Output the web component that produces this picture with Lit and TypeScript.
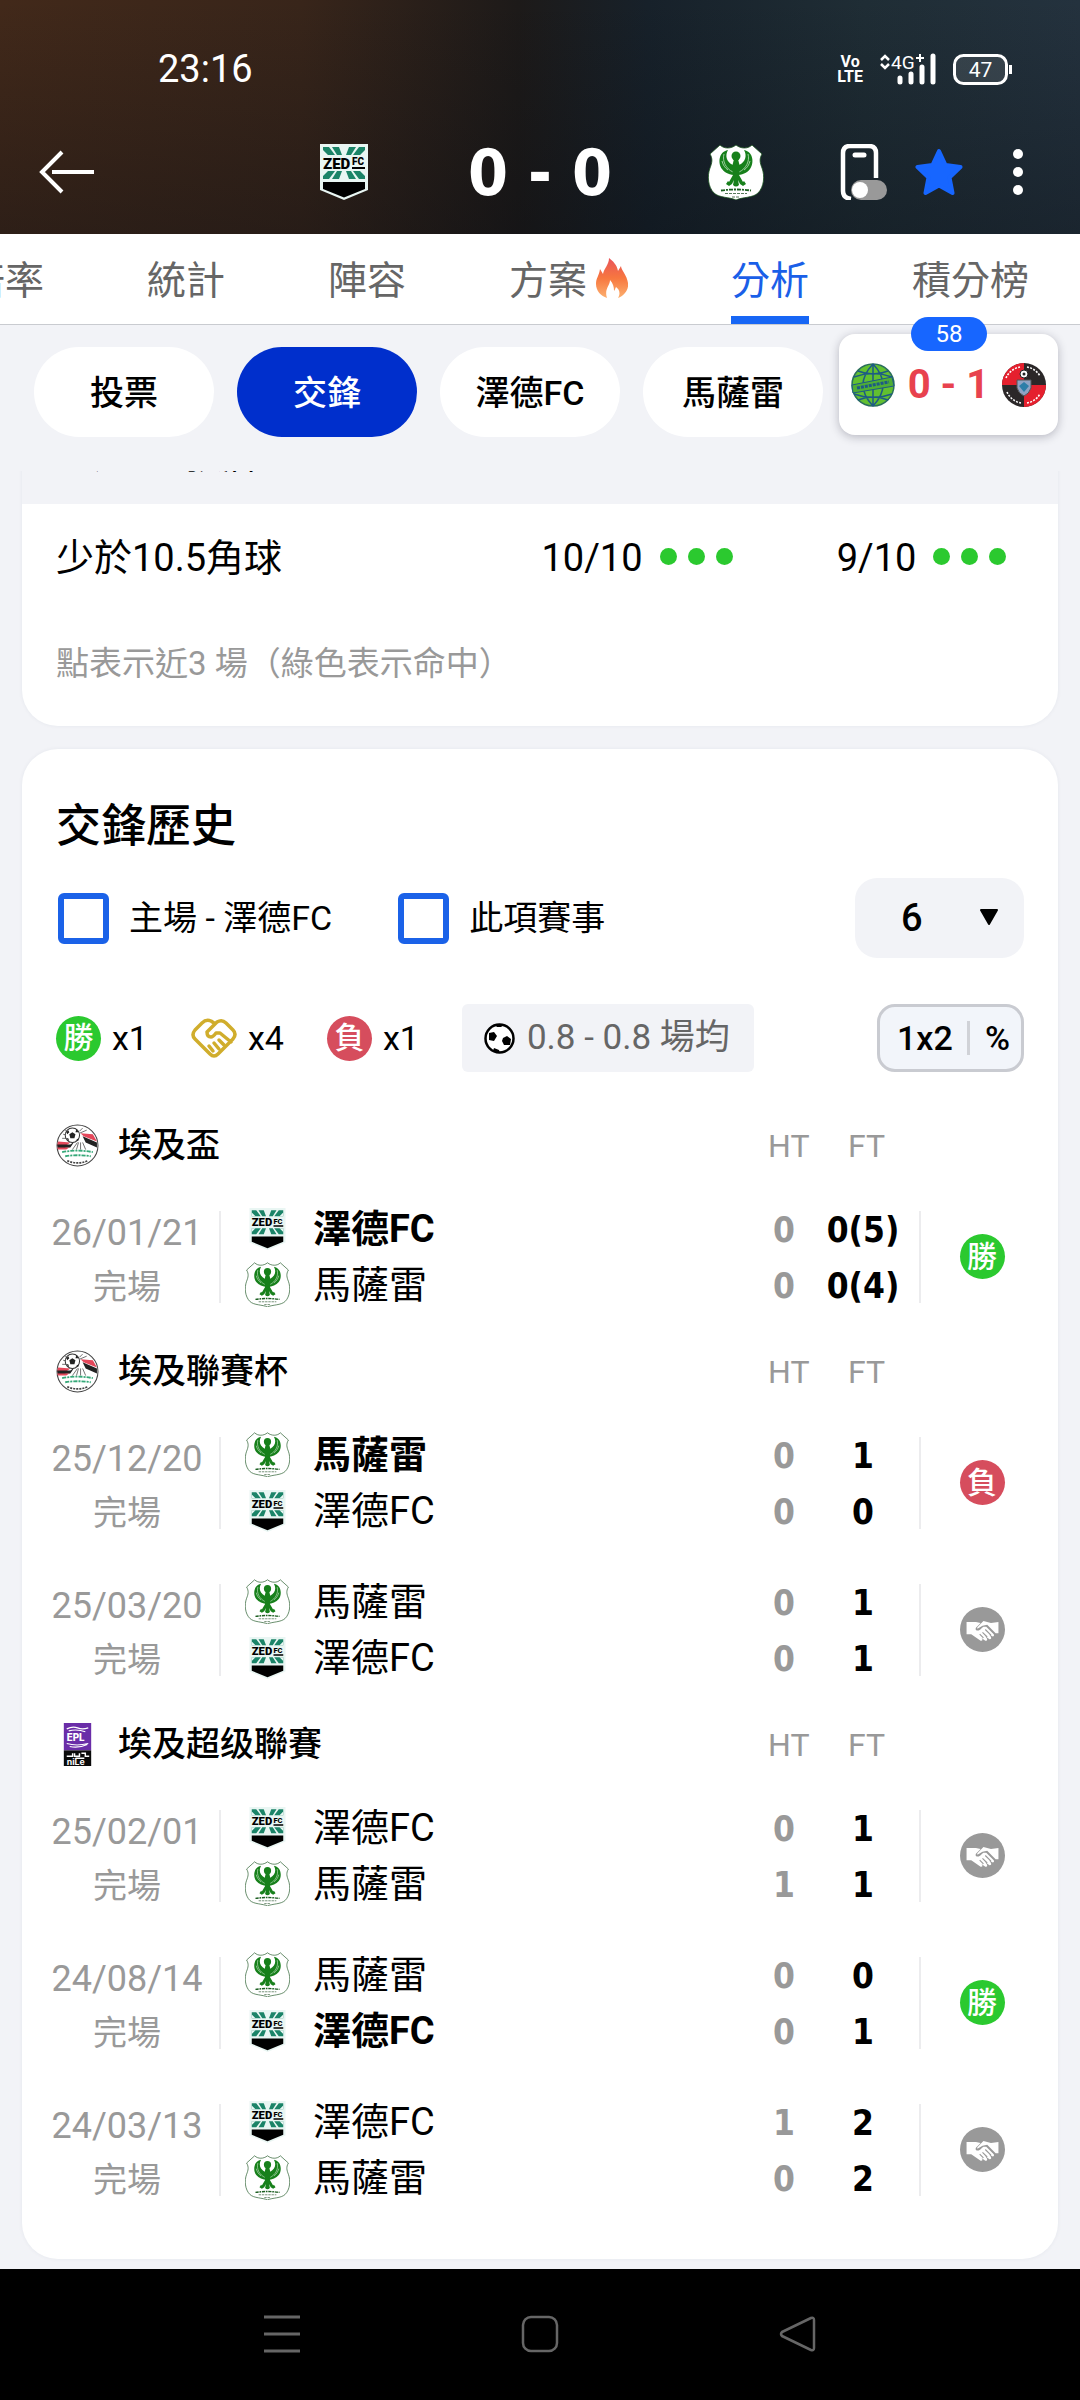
import { LitElement, html, css, svg } from "lit";
import { customElement, property, state } from "lit/decorators.js";
import { classMap } from "lit/directives/class-map.js";

type Team = "zed" | "masry";
type Result = "win" | "draw" | "loss";

interface Match {
  date: string;
  teams: [Team, Team];
  bold?: Team;
  ht: [string, string];
  ft: [string, string];
  result: Result;
}

interface League {
  icon: "efa" | "epl";
  name: string;
  matches: Match[];
}

const TEAM_NAMES: Record<Team, string> = { zed: "澤德FC", masry: "馬薩雷" };

const LEAGUES: League[] = [
  {
    icon: "efa",
    name: "埃及盃",
    matches: [
      { date: "26/01/21", teams: ["zed", "masry"], bold: "zed", ht: ["0", "0"], ft: ["0(5)", "0(4)"], result: "win" },
    ],
  },
  {
    icon: "efa",
    name: "埃及聯賽杯",
    matches: [
      { date: "25/12/20", teams: ["masry", "zed"], bold: "masry", ht: ["0", "0"], ft: ["1", "0"], result: "loss" },
      { date: "25/03/20", teams: ["masry", "zed"], ht: ["0", "0"], ft: ["1", "1"], result: "draw" },
    ],
  },
  {
    icon: "epl",
    name: "埃及超级聯賽",
    matches: [
      { date: "25/02/01", teams: ["zed", "masry"], ht: ["0", "1"], ft: ["1", "1"], result: "draw" },
      { date: "24/08/14", teams: ["masry", "zed"], bold: "zed", ht: ["0", "0"], ft: ["0", "1"], result: "win" },
      { date: "24/03/13", teams: ["zed", "masry"], ht: ["1", "0"], ft: ["2", "2"], result: "draw" },
    ],
  },
];

const TRENDS = [
  { label: "少於4.5張牌", home: "9/10", away: "10/10" },
  { label: "少於10.5角球", home: "10/10", away: "9/10" },
];

const handshake = svg`
  <circle cx="24" cy="24" r="24" fill="#999"/>
  <path fill="#fff" d="M7 16h10l5 1-5 5c-1 2 0 3 2 3 3 0 4-3 6-4l3 0 8 8c1 2-1 3-2 2l-3-2 2 3c1 2-1 3-2 2l-4-3 2 3c0 2-1 2-2 2l-4-3 1 2c0 1-1 1-2 1l-10-7H7z"/>
  <path fill="#fff" d="M41 16v12h-3l-9-9-5 1-5 3c-1 0-1-1 0-2l6-6 8 2z"/>
  <path fill="none" stroke="#999" stroke-width="1.2" d="M27 24l6 6M24 27l5 5M21 29l4 4"/>`;

const ART = {
  zed: {
    box: "0 0 48 56",
    body: svg`
      <path fill="#e9f6f3" d="M0 0h48v46L24 56 0 46z"/>
      <path fill="#1b8468" d="M3 3h6l6 8H3zM12 3h7l3 8h-5zM29 3h7l-5 8h-5zM39 3h6v8H33zM3 27h12l-6 8H3zM17 27h5l-3 8h-7zM26 27h5l5 8h-7zM33 27h12v8h-6z"/>
      <path fill="#e9f6f3" d="M3 6l5 5H3zM45 6v5h-5zM3 32l5-5H3zM45 32v-5h-5z"/>
      <text x="3" y="24.500" font-family="Roboto, sans-serif" font-weight="900" font-size="15" fill="#000">ZED</text>
      <text x="32" y="21" font-family="Roboto, sans-serif" font-weight="900" font-size="10" fill="#000">FC</text>
      <path fill="#000" d="M32 23h13v2H32zM3 38h42v7l-21 8.500L3 45z"/>`,
  },
  masry: {
    box: "0 0 56 56",
    body: svg`
      <path fill="#fff" stroke="#16501c" stroke-width="0.8" d="M12 1c4 4 11 4 16 0 5 4 12 4 16 0l10 9c-3 5-2 9 0 14 3 8 2 19-4 25-5 5-16 4-22 7-6-3-17-2-22-7-6-6-7-17-4-25 2-5 3-9 0-14z"/>
      <path fill="#17801b" d="M20 6C10 8 10 20 14 25c3 4 8 6 14 6s11-2 14-6c4-5 4-17-6-19 3 5 2 12-5 15q-3 1-6 0C18 18 17 11 20 6z"/>
      <path fill="none" stroke="#d4efd4" stroke-width="0.700" d="M16 10c-2 7 2 15 9 18M40 10c2 7-2 15-9 18M14 17c1 4 3 7 6 9M42 17c-1 4-3 7-6 9"/>
      <circle cx="28" cy="12" r="4.500" fill="#17801b"/>
      <path fill="#17801b" d="M26 15h4l2 8-1 8 4 7 1-1 2 3-3 2-3-2-2-4 1 5q-3 3-6 0l1-5-2 4-3 2-3-2 2-3 1 1 4-7-1-8z"/>
      <path fill="none" stroke="#1b5e20" stroke-width="1.800" stroke-dasharray="4 1 2 1" d="M13 46.500q15-2 30 0"/>
      <path fill="none" stroke="#456b48" stroke-width="0.900" stroke-dasharray="3 1" d="M17 49.500h22M24 53h8"/>`,
  },
  efa: {
    box: "0 0 42 42",
    body: svg`
      <circle cx="21" cy="21" r="20" fill="#fff" stroke="#444" stroke-width="1"/>
      <path fill="#e4475a" d="M24 9l12 1 4 7-13-5zM2 17l12 1-4 3H1z"/>
      <path fill="#222" d="M26 12l14 6v5l-11-5zM1 20l13 0 4-3-4 6-12 1z"/>
      <path fill="#e4475a" d="M1 23h12l-3 2H2z"/>
      <path stroke="#555" stroke-width="0.800" fill="none" d="M21 18l-5 7M22 18l-2 7M24 18v7M26 18l3 7M9 6l4 3M7 10l5 1M6 14h6M26 4l-3 3M30 6l-7 3"/>
      <circle cx="16" cy="11" r="7" fill="#fff" stroke="#333" stroke-width="1"/>
      <path fill="#222" d="M16 8l3 2-1 4h-4l-1-4zM10 8l2-2 1 2-2 2zM20 5l2 3-3 0zM10 14l2 0 1 3zM19 16l3-2v2z"/>
      <path fill="none" stroke="#35a878" stroke-width="1.800" stroke-dasharray="4 1 2 1" d="M6 27.500q15-3 30 0M9 31.500q12-2 25 0"/>
      <path fill="none" stroke="#444" stroke-width="1.600" stroke-dasharray="2 1" d="M11 36q10 4 20 0"/>`,
  },
  epl: {
    box: "0 0 28 44",
    body: svg`
      <path fill="#6a2da8" d="M0 0h28v28H0z"/><path fill="#0a0a0a" d="M0 28h28v16H0z"/>
      <text x="3" y="18" font-family="Inter, sans-serif" font-weight="800" font-size="10" fill="#fff">EPL</text>
      <path fill="none" stroke="#fff" stroke-width="1.200" d="M3 6q6-3 11-1t11 0M5 8q9-2 17 1M3 21q10 3 22 0M6 24q9 2 18-2"/>
      <path fill="none" stroke="#fff" stroke-width="1.500" d="M3 34h6v-3M11 31v3h5v-3M18 31h4v3h4M12 36h9"/>
      <text x="3" y="43" font-family="Inter, sans-serif" font-weight="700" font-size="9" fill="#fff">niLe</text>`,
  },
  globe: {
    box: "0 0 44 44",
    body: svg`
      <circle cx="22" cy="22" r="21" fill="#62c030" stroke="#2b6f5c" stroke-width="1.500"/>
      <path fill="none" stroke="#1d5a86" stroke-width="1.500" d="M22 1v42M3 14q19-7 38 0M3 31q19 7 38 0M7 8q15 6 30 0M7 37q15-6 30 0M22 1q-20 21 0 42M22 1q20 21 0 42"/>
      <path fill="#4fae35" stroke="#1d5a86" d="M1 22l40-8 2 9-41 7z"/>
      <path fill="none" stroke="#1d5a86" stroke-width="3" stroke-dasharray="3 1" d="M6 25l32-6"/>`,
  },
  redblack: {
    box: "0 0 44 44",
    body: svg`
      <circle cx="22" cy="22" r="22" fill="#2b2728"/>
      <path fill="#e5202e" d="M0 22A22 22 0 0 1 22 0v22zM44 22a22 22 0 0 1-22 22V22z"/>
      <path fill="none" stroke="#fff" stroke-width="1.600" stroke-dasharray="2 1.300" d="M4 15A19 19 0 0 1 18 4M25 4a19 19 0 0 1 13 9M5 29a19 19 0 0 0 14 11M25 40a19 19 0 0 0 13-9"/>
      <path fill="#8fa3c4" stroke="#555" d="M15 17h14v8q-2 6-7 8-5-2-7-8z"/>
      <path fill="#2d7ea8" d="M17 23l5-4 5 4-5 6z"/>
      <circle cx="22" cy="11" r="4" fill="#fff" stroke="#222"/>
      <circle cx="22" cy="11" r="1.500" fill="#222"/>`,
  },
  draw: { box: "0 0 48 48", body: handshake },
};

@customElement("art-icon")
class ArtIcon extends LitElement {
  static styles = css`
    :host {
      display: inline-flex;
      align-items: center;
      justify-content: center;
    }
    svg {
      display: block;
      width: 100%;
      height: 100%;
    }
  `;

  @property() name: keyof typeof ART = "zed";

  render() {
    const art = ART[this.name];
    return html`<svg viewBox=${art.box} aria-hidden="true">${art.body}</svg>`;
  }
}

@customElement("result-badge")
class ResultBadge extends LitElement {
  static styles = css`
    :host {
      display: inline-flex;
    }
    .badge {
      display: flex;
      align-items: center;
      justify-content: center;
      width: 45px;
      height: 45px;
      border-radius: 50%;
      color: #fff;
      font-size: 30px;
      line-height: 44px;
      font-weight: 500;
    }
    .win {
      background: #2bc92f;
    }
    .loss {
      background: #d64d5d;
    }
    art-icon {
      width: 45px;
      height: 45px;
    }
  `;

  @property() result: Result = "win";

  render() {
    if (this.result === "draw") return html`<art-icon name="draw"></art-icon>`;
    return html`<span class="badge ${this.result}">${this.result === "win" ? "勝" : "負"}</span>`;
  }
}

@customElement("app-root")
class AppRoot extends LitElement {
  static styles = css`
    :host {
      display: flex;
      flex-direction: column;
      min-height: 100vh;
      background: #f2f3f7;
      color: #000;
      font-family: Roboto, "Noto Sans CJK TC", sans-serif;
      font-size: 34px;
      line-height: 48px;
    }
    * {
      box-sizing: border-box;
    }
    button,
    select {
      font: inherit;
      color: inherit;
      border: 0;
      background: none;
      padding: 0;
      margin: 0;
    }
    button svg,
    .status svg {
      display: block;
    }
    h2 {
      margin: 0;
    }

    .top {
      background:
        linear-gradient(to bottom, rgba(8, 12, 18, 0), rgba(8, 12, 18, 0.35)),
        linear-gradient(to right, #42291a 0%, #38251a 28%, #1d1a19 48%, #17212a 60%, #1f2d35 80%, #24323e 100%);
      color: #fff;
    }
    .status {
      display: flex;
      align-items: center;
      justify-content: space-between;
      height: 110px;
      padding: 28px 68px 0 158px;
      font-size: 38px;
    }
    .signals {
      display: flex;
      align-items: center;
      gap: 16px;
    }
    .volte {
      font-family: "Liberation Sans Narrow", Roboto, sans-serif;
      font-size: 16px;
      line-height: 15px;
      font-weight: 700;
      text-align: center;
    }
    .appbar {
      display: grid;
      grid-template-columns: 1fr 448px 1fr;
      align-items: center;
      height: 124px;
      padding: 0 34px;
    }
    .scoreline {
      display: flex;
      align-items: center;
      justify-content: space-between;
    }
    .crest {
      width: 56px;
      height: 56px;
    }
    .headline {
      font-family: "DejaVu Sans Condensed", "DejaVu Sans", sans-serif;
      font-weight: 700;
      font-size: 64px;
      line-height: 68px;
      padding-top: 2px;
    }
    .actions {
      display: flex;
      justify-content: flex-end;
      gap: 27px;
    }

    .tabs {
      display: flex;
      justify-content: flex-end;
      gap: 103px;
      height: 91px;
      padding-right: 51px;
      overflow: hidden;
      background: #fff;
      border-bottom: 1px solid #c9cbd0;
    }
    .tabs a {
      display: flex;
      flex: none;
      align-items: center;
      gap: 9px;
      height: 90px;
      padding-top: 12px;
      border-bottom: 8px solid transparent;
      font-size: 39px;
      color: #666;
      text-decoration: none;
    }
    .tabs a.active {
      color: #1a5fe8;
      border-bottom-color: #1766f5;
    }
    .tabs svg {
      margin-top: -6px;
    }

    .filters {
      position: relative;
      display: flex;
      gap: 23px;
      padding: 22px 34px 34px;
    }
    .chip {
      flex: none;
      width: 180px;
      height: 90px;
      padding-top: 2px;
      border-radius: 45px;
      background: #fff;
      font-weight: 500;
    }
    .chip.active {
      background: #002fcc;
      color: #fff;
    }
    .live {
      position: absolute;
      top: 9px;
      right: 22px;
      display: flex;
      align-items: center;
      justify-content: space-between;
      width: 219px;
      height: 101px;
      padding: 0 12px;
      border-radius: 16px;
      background: #fff;
      box-shadow: 0 2px 10px rgba(30, 30, 50, 0.28);
      color: #e8424e;
      font-size: 40px;
      font-weight: 700;
      text-decoration: none;
    }
    .live art-icon {
      width: 44px;
      height: 44px;
    }
    .minute {
      position: absolute;
      top: -17px;
      left: 72px;
      width: 76px;
      height: 34px;
      border-radius: 17px;
      background: #1766ff;
      color: #fff;
      font-size: 24px;
      line-height: 34px;
      font-weight: 400;
      text-align: center;
    }

    main {
      padding: 0 22px 10px;
      overflow: hidden;
    }
    .card {
      background: #fff;
      border-radius: 36px;
      box-shadow: 0 0 4px rgba(40, 50, 80, 0.06);
    }
    .trends {
      margin-top: -70px;
      padding-bottom: 38px;
      overflow: hidden;
    }
    table,
    tbody {
      display: block;
    }
    th,
    td {
      display: block;
      padding: 0;
      font-weight: 400;
      text-align: left;
    }
    .trend {
      display: grid;
      grid-template-columns: 1fr 296px 273px;
      align-items: center;
      height: 103px;
      padding: 4px 0 0 34px;
      font-size: 38px;
    }
    .trend.alt {
      background: #f2f3f7;
    }
    .hit {
      display: flex;
      align-items: center;
      justify-content: center;
      gap: 17px;
    }
    .dots {
      display: flex;
      gap: 11px;
      padding-bottom: 3px;
    }
    .dots i {
      width: 17px;
      height: 17px;
      border-radius: 50%;
      background: #2bc92f;
    }
    .note {
      margin: 0;
      padding: 33px 34px 0;
      font-size: 33px;
      color: #999;
    }

    .history {
      margin-top: 23px;
      padding: 48px 0 36px;
    }
    .history h2,
    .options,
    .summary {
      margin-left: 34px;
      margin-right: 34px;
    }
    .history h2 {
      font-size: 45px;
      line-height: 60px;
      font-weight: 500;
    }
    .options {
      display: flex;
      align-items: center;
      margin-top: 21px;
    }
    .check {
      display: flex;
      align-items: center;
      gap: 20px;
      margin-right: 64px;
    }
    .check input {
      appearance: none;
      width: 51px;
      height: 51px;
      margin: 0 0 0 2px;
      border: 6px solid #1b62e8;
      border-radius: 6px;
      background: #fff;
    }
    .check input:checked {
      background: #1b62e8;
    }
    .count {
      position: relative;
      margin-left: auto;
    }
    .count select {
      display: block;
      appearance: none;
      width: 169px;
      height: 80px;
      padding-left: 46px;
      border-radius: 22px;
      background: #f2f3f7;
      font-size: 38px;
      font-weight: 500;
    }
    .count svg {
      position: absolute;
      right: 26px;
      top: 31px;
      pointer-events: none;
    }
    .summary {
      display: flex;
      align-items: center;
      margin-top: 46px;
      height: 68px;
    }
    .tally {
      display: flex;
      align-items: center;
      gap: 11px;
      margin-right: 43px;
    }
    .average {
      display: flex;
      align-items: center;
      gap: 12px;
      height: 68px;
      padding: 0 24px 0 22px;
      border-radius: 6px;
      background: #f2f3f7;
      color: #666;
      font-size: 35px;
    }
    .mode {
      display: flex;
      align-items: center;
      justify-content: space-between;
      margin-left: auto;
      width: 147px;
      height: 68px;
      padding: 0 11px 0 17px;
      border: 3px solid #c9cbd1;
      border-radius: 18px;
      background: #f2f5fa;
      font-weight: 500;
    }
    .mode i {
      width: 3px;
      height: 34px;
      background: #d0d2d7;
    }

    .games {
      margin-top: 32px;
    }
    .row {
      display: grid;
      grid-template-columns: 186px 1fr 46px 112px 124px;
      align-items: center;
      margin: 0 15px 0 13px;
    }
    .league {
      height: 79px;
      padding-top: 3px;
    }
    .league-name {
      grid-column: 1 / 3;
      display: flex;
      align-items: center;
      gap: 19px;
      padding-left: 21px;
      font-weight: 500;
    }
    .league-name art-icon {
      width: 43px;
      height: 43px;
    }
    .period {
      padding: 2px 0 0 7px;
      font-size: 32px;
      color: #999;
      text-align: center;
      white-space: nowrap;
    }
    .game {
      height: 147px;
    }
    .when {
      height: 92px;
      border-right: 2px solid #ececee;
      color: #999;
      text-align: center;
      white-space: nowrap;
    }
    .when div {
      height: 53px;
      line-height: 46px;
    }
    .when .date {
      font-size: 36px;
      line-height: 44px;
    }
    .teams {
      padding-left: 24px;
    }
    .team {
      display: flex;
      align-items: center;
      gap: 23px;
      height: 56px;
      font-size: 38px;
    }
    .team art-icon {
      width: 45px;
      height: 45px;
    }
    .team art-icon.zed {
      height: 42px;
    }
    .team.bold {
      font-weight: 700;
    }
    .score {
      font-family: "DejaVu Sans Condensed", "DejaVu Sans", sans-serif;
      font-weight: 700;
      font-size: 35px;
      line-height: 56px;
      padding-top: 2px;
      text-align: center;
    }
    .score.half {
      color: #999;
    }
    .outcome {
      display: flex;
      align-items: center;
      justify-content: center;
      height: 92px;
      border-left: 2px solid #ececee;
    }

    .navbar {
      display: flex;
      justify-content: center;
      align-items: center;
      gap: 218px;
      height: 132px;
      margin-top: auto;
      background: #000;
    }
  `;

  @state() private filter = "交鋒";

  private trendValue(value: string) {
    return html`<td class="hit">${value}<span class="dots"><i></i><i></i><i></i></span></td>`;
  }

  private gameRow(game: Match) {
    return html`
      <tr class="row game">
        <td class="when"><div class="date">${game.date}</div><div>完場</div></td>
        <td class="teams">
          ${game.teams.map(
            (team) => html`<div class=${classMap({ team: true, bold: game.bold === team })}>
              <art-icon class=${team} name=${team}></art-icon>${TEAM_NAMES[team]}
            </div>`
          )}
        </td>
        <td class="score half">${game.ht.map((goals) => html`<div>${goals}</div>`)}</td>
        <td class="score">${game.ft.map((goals) => html`<div>${goals}</div>`)}</td>
        <td class="outcome"><result-badge result=${game.result}></result-badge></td>
      </tr>
    `;
  }

  private header() {
    return html`
      <header class="top">
        <div class="status">
          <span>23:16</span>
          <div class="signals">
            <div class="volte">Vo<br />LTE</div>
            <svg width="58" height="32" viewBox="0 0 58 32" aria-hidden="true">
              <path d="M2 7l4-4 4 4M2 11l4 4 4-4" fill="none" stroke="#fff" stroke-width="2.5" />
              <text x="12" y="16" font-family="Roboto, sans-serif" font-size="19" fill="#fff">4G</text>
              <path d="M37 5h8M41 1v8" stroke="#fff" stroke-width="2" />
              <path d="M21 25v4M32 21v8M43 14v15M54 3v26" stroke="#fff" stroke-width="5" stroke-linecap="round" />
            </svg>
            <svg width="59" height="31" viewBox="0 0 59 31" aria-hidden="true">
              <rect x="1.500" y="1.500" width="52" height="28" rx="9" fill="rgba(255,255,255,.1)" stroke="#fff" stroke-width="3" />
              <path d="M57.500 11v9" stroke="#fff" stroke-width="3" />
              <text x="27.500" y="23" text-anchor="middle" font-family="Roboto, sans-serif" font-size="21" fill="#fff">47</text>
            </svg>
          </div>
        </div>
        <div class="appbar">
          <button aria-label="返回">
            <svg width="62" height="48" viewBox="0 0 62 48">
              <path d="M28 4L8 24l20 20M18 24h42" fill="none" stroke="#fff" stroke-width="4" />
            </svg>
          </button>
          <div class="scoreline">
            <art-icon class="crest" name="zed"></art-icon>
            <span class="headline">0 - 0</span>
            <art-icon class="crest" name="masry"></art-icon>
          </div>
          <div class="actions">
            <button aria-label="懸浮窗">
              <svg width="48" height="56" viewBox="0 0 48 56">
                <path d="M36 34V9q0-7-7-7H10Q3 2 3 9v38q0 7 8 8" fill="none" stroke="#fff" stroke-width="4.500" />
                <path d="M15 11h9" stroke="#fff" stroke-width="5" stroke-linecap="round" />
                <rect x="11" y="36" width="36" height="20" rx="10" fill="#999" />
                <circle cx="20" cy="46" r="8" fill="#fff" />
              </svg>
            </button>
            <button aria-label="收藏">
              <svg width="48" height="48" viewBox="0 0 48 48">
                <path
                  d="M24 3l6.500 14 15 2-11 10.500 3 15.500L24 37.500 10.500 45l3-15.500L2.500 19l15-2z"
                  fill="#1766ff"
                  stroke="#1766ff"
                  stroke-width="4"
                  stroke-linejoin="round"
                />
              </svg>
            </button>
            <button aria-label="更多">
              <svg width="56" height="48" viewBox="0 0 56 48" fill="#fff">
                <circle cx="28" cy="6" r="5" /><circle cx="28" cy="24" r="5" /><circle cx="28" cy="42" r="5" />
              </svg>
            </button>
          </div>
        </div>
      </header>
    `;
  }

  render() {
    return html`
      ${this.header()}
      <nav class="tabs">
        <a href="#odds">倍率</a>
        <a href="#stats">統計</a>
        <a href="#lineup">陣容</a>
        <a href="#picks">
          方案
          <svg width="32" height="40" viewBox="0 0 32 40" aria-hidden="true">
            <defs>
              <linearGradient id="flame" x1="0" y1="0" x2="0" y2="1">
                <stop offset="0" stop-color="#e9545a" />
                <stop offset="0.500" stop-color="#f7773f" />
                <stop offset="1" stop-color="#fcb070" />
              </linearGradient>
            </defs>
            <path
              fill="url(#flame)"
              d="M13 0c4 3 8 7 9 13l3-5c0 4 6 9 7 17 1 7-4 13-10 15 3-5 1-9-2-11-1 2-1 3-2 4 0-4-1-8-4-11 0 6-6 9-3 18C5 38 0 33 0 26c0-6 3-8 4-15l3 5c1-6 6-9 6-16z"
            />
          </svg>
        </a>
        <a href="#analysis" class="active" aria-current="page">分析</a>
        <a href="#table">積分榜</a>
      </nav>
      <div class="filters">
        ${["投票", "交鋒", "澤德FC", "馬薩雷"].map(
          (name) => html`<button
            class=${classMap({ chip: true, active: this.filter === name })}
            @click=${() => (this.filter = name)}
          >
            ${name}
          </button>`
        )}
        <a class="live" href="#live">
          <span class="minute">58</span>
          <art-icon name="globe"></art-icon>
          <span>0 - 1</span>
          <art-icon name="redblack"></art-icon>
        </a>
      </div>
      <main>
        <section class="card trends">
          <table>
            <tbody>
              ${TRENDS.map(
                (trend, i) => html`<tr class=${classMap({ trend: true, alt: i % 2 === 0 })}>
                  <th scope="row">${trend.label}</th>
                  ${this.trendValue(trend.home)}${this.trendValue(trend.away)}
                </tr>`
              )}
            </tbody>
          </table>
          <p class="note">點表示近3 場（綠色表示命中）</p>
        </section>
        <section class="card history">
          <h2>交鋒歷史</h2>
          <div class="options">
            <label class="check"><input type="checkbox" />主場 - 澤德FC</label>
            <label class="check"><input type="checkbox" />此項賽事</label>
            <div class="count">
              <select aria-label="場數">
                <option>6</option>
                <option>10</option>
                <option>20</option>
              </select>
              <svg width="18" height="17" viewBox="0 0 18 17" aria-hidden="true">
                <path d="M1 1h16L9 15z" stroke="#000" stroke-width="2" stroke-linejoin="round" />
              </svg>
            </div>
          </div>
          <div class="summary">
            <div class="tally"><result-badge result="win"></result-badge>x1</div>
            <div class="tally">
              <svg width="46" height="40" viewBox="0 0 46 40" fill="none" stroke="#d0ad2c" stroke-width="3.500" stroke-linejoin="round" stroke-linecap="round" aria-hidden="true">
                <path d="M23 5l-3-2q-5-2-9 2L4 12q-4 5 0 9l15 15q4 4 8 0l15-15q4-5 0-9l-7-7q-4-4-9-1L16 14q0 5 4 5 2 0 5-4l4 0 11 9" />
                <path d="M18 28l4 5M23 25l5 6M28 22l5 5" />
              </svg>
              x4
            </div>
            <div class="tally"><result-badge result="loss"></result-badge>x1</div>
            <div class="average">
              <svg width="31" height="31" viewBox="0 0 31 31" aria-hidden="true">
                <circle cx="15.500" cy="15.500" r="14" fill="#fff" stroke="#000" stroke-width="2.500" />
                <path d="M5 10l5-1 3 4-3 5-5-1zM19 15l4-2 4 3-1 6-6 0-2-4zM11 2h9l-3 2h-4zM10 25l5 2 1 3-7-2z" />
              </svg>
              0.8 - 0.8 場均
            </div>
            <button class="mode"><span>1x2</span><i></i><span>%</span></button>
          </div>
          <table class="games">
            ${LEAGUES.map(
              (league) => html`<tbody>
                <tr class="row league">
                  <th class="league-name" scope="rowgroup">
                    <art-icon name=${league.icon}></art-icon>${league.name}
                  </th>
                  <th class="period" scope="col">HT</th>
                  <th class="period" scope="col">FT</th>
                </tr>
                ${league.matches.map((game) => this.gameRow(game))}
              </tbody>`
            )}
          </table>
        </section>
      </main>
      <nav class="navbar">
        <button aria-label="最近使用">
          <svg width="40" height="40" viewBox="0 0 40 40" stroke="#666" stroke-width="3">
            <path d="M2 2h36M2 19h36M2 36h36" />
          </svg>
        </button>
        <button aria-label="主畫面">
          <svg width="40" height="40" viewBox="0 0 40 40" fill="none" stroke="#666" stroke-width="2.500">
            <rect x="3" y="2" width="34" height="34" rx="8" />
          </svg>
        </button>
        <button aria-label="上一頁">
          <svg width="40" height="40" viewBox="0 0 40 40" fill="none" stroke="#666" stroke-width="2.500" stroke-linejoin="round">
            <path d="M4 17q-2 2 0 4l29 14q3 1 3-2V5q0-3-3-2z" />
          </svg>
        </button>
      </nav>
    `;
  }
}
